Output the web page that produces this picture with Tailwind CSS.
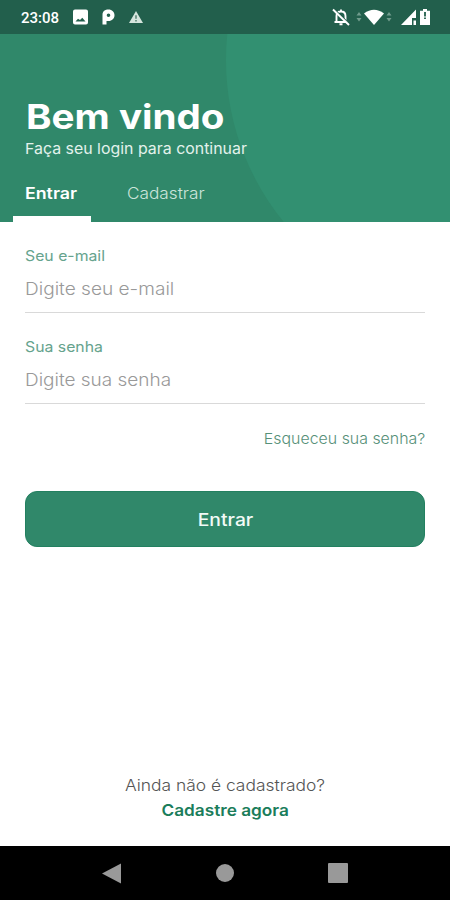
<!DOCTYPE html>
<html lang="pt-BR">
<head>
<meta charset="utf-8">
<title>Entrar</title>
<script src="https://cdn.jsdelivr.net/npm/@tailwindcss/browser@4"></script>
</head>
<body class="bg-white">
<div class="w-[450px] h-[900px] flex flex-col overflow-hidden bg-white font-['Inter',sans-serif]">
  <div class="h-[34px] shrink-0 bg-[#225f4c] flex items-center justify-between pl-[21px] pr-[20px] text-white">
    <div class="flex items-center">
      <span class="w-[38px] mr-[14px] font-['Roboto',sans-serif] text-[15px] leading-[20px] font-medium pt-[2px] whitespace-nowrap">23:08</span>
      <svg class="w-[15px] h-[16px] mr-[13px]" viewBox="0 0 15 16" fill="currentColor"><path fill-rule="evenodd" d="M2 .5h11a2 2 0 0 1 2 2v11a2 2 0 0 1-2 2H2a2 2 0 0 1-2-2v-11a2 2 0 0 1 2-2ZM2.500 12.500h10l-3.200-3.800-2.300 2.300-2-1.300Z"/></svg>
      <svg class="w-[14px] h-[16px] mr-[14px]" viewBox="0 0 14 16"><path fill="currentColor" fill-rule="evenodd" d="M1.500 15.500V6C1.500 2 4 .5 7.500.5 11 .5 13.500 3 13.500 6.200S11 12 7.500 12H5.500v3.500ZM7.500 4.500a1.800 1.800 0 1 0 0 3.600 1.800 1.800 0 0 0 0-3.600Z"/></svg>
      <svg class="w-[14px] h-[14px]" viewBox="0 0 15 14"><path d="M7.500.5 15 13.500H0Z" fill="#d5e5dd"/><path d="M7.500 5v4M7.500 10.300v1.500" stroke="#537f6f" stroke-width="1.600"/></svg>
    </div>
    <div class="flex items-center">
      <svg class="w-[18px] h-[18px] mr-[6px]" viewBox="0 0 18 18" fill="none" stroke="currentColor"><path d="M4.500 13.500V8c0-3 2-4.500 4.500-4.500S13.500 5 13.500 8v5.500M2.500 14h13M7.500 16.300h3M9 1.500V4" stroke-width="1.900"/><path d="M2.500 1.500 18 16.500" stroke="#225f4c" stroke-width="1.600"/><path d="M1 1.500 17 17" stroke-width="1.900"/></svg>
      <svg class="w-[36px] h-[16px] mr-[9px]" viewBox="0 0 36 16"><path d="M.5 6.500 3 3l2.500 3.500ZM.5 9 3 12.500 5.500 9ZM30.500 6.500 33 3l2.500 3.500ZM30.500 9l2.500 3.500L35.500 9Z" fill="#719c8d"/><path d="M8 4.500Q18-3 28 4.500L18 16Z" fill="currentColor"/></svg>
      <svg class="w-[16px] h-[16px] mr-[3px]" viewBox="0 0 16 16" fill="currentColor"><path d="M0 16 15 .5V9H11v7ZM12.500 11.500h2.500V16h-2.500Z"/></svg>
      <svg class="w-[10px] h-[16px]" viewBox="0 0 10 16"><path d="M3 0h4v1.800h3V16H0V1.800h3Z" fill="currentColor"/><path d="M5 3v4.500M5 8.500v1.500" stroke="#225f4c" stroke-width="1.800"/></svg>
    </div>
  </div>

  <header class="relative overflow-hidden h-[188px] shrink-0 bg-[#30886a] text-white pl-[25px]">
    <div class="absolute left-[226px] top-[-230px] w-[512px] h-[512px] rounded-full bg-[#329071]"></div>
    <div class="relative flex flex-col items-start h-full pt-[63px]">
      <h1 class="ml-px text-[34px] leading-[40px] font-bold origin-left scale-x-[1.135] whitespace-nowrap">Bem vindo</h1>
      <p class="mt-[2px] text-[15px] leading-[20px] text-[#e3f2ec] origin-left scale-x-[1.06] whitespace-nowrap">Faça seu login para continuar</p>
      <nav class="mt-[24px] -ml-[12px] flex flex-1 text-[16px] leading-[20px]">
        <a class="w-[78px] pl-[12px] border-b-[6px] border-white"><span class="inline-block font-semibold origin-left scale-x-[1.11]">Entrar</span></a>
        <a class="pl-[36px]"><span class="inline-block text-[#cbe4da] font-light origin-left scale-x-[1.075]">Cadastrar</span></a>
      </nav>
    </div>
  </header>

  <main class="flex-1 flex flex-col px-[25px] pt-[24px]">
    <label class="h-[67px] flex flex-col items-start border-b border-[#d9d9d9]">
      <span class="text-[14.5px] leading-[20px] text-[#66a38d] origin-left scale-x-[1.09]">Seu e-mail</span>
      <span class="mt-[11px] text-[17.5px] leading-[24px] font-light text-[#999] origin-left scale-x-[1.09]">Digite seu e-mail</span>
    </label>
    <label class="mt-[24px] h-[67px] flex flex-col items-start border-b border-[#d9d9d9]">
      <span class="text-[14.5px] leading-[20px] text-[#66a38d] origin-left scale-x-[1.09]">Sua senha</span>
      <span class="mt-[11px] text-[17.5px] leading-[24px] font-light text-[#999] origin-left scale-x-[1.085]">Digite sua senha</span>
    </label>
    <a class="mt-[25px] self-end text-[15px] leading-[20px] font-light text-[#569078] origin-right scale-x-[1.06]">Esqueceu sua senha?</a>
    <button class="mt-[42px] h-[56px] shrink-0 rounded-[12px] bg-[#30886a] border border-[#238060] text-[#f2faf6] text-[17px] font-medium pt-[3px]"><span class="inline-block scale-x-[1.135]">Entrar</span></button>
    <div class="mt-auto pb-[26px] flex flex-col items-center text-[16px] leading-[20px]">
      <span class="font-light text-[#555] scale-x-[1.088]">Ainda não é cadastrado?</span>
      <a class="mt-[5px] font-semibold text-[#1b7d5b] scale-x-[1.075]">Cadastre agora</a>
    </div>
  </main>

  <div class="h-[54px] shrink-0 bg-black flex items-center justify-between pl-[102px] pr-[102px]">
    <svg class="w-[19px] h-[21px]" viewBox="0 0 19 21"><path d="M19 .5v20L0 10.500Z" fill="#999"/></svg>
    <div class="w-[18px] h-[18px] rounded-full bg-[#999]"></div>
    <div class="w-[20px] h-[20px] rounded-[1px] bg-[#999]"></div>
  </div>
</div>
</body>
</html>
